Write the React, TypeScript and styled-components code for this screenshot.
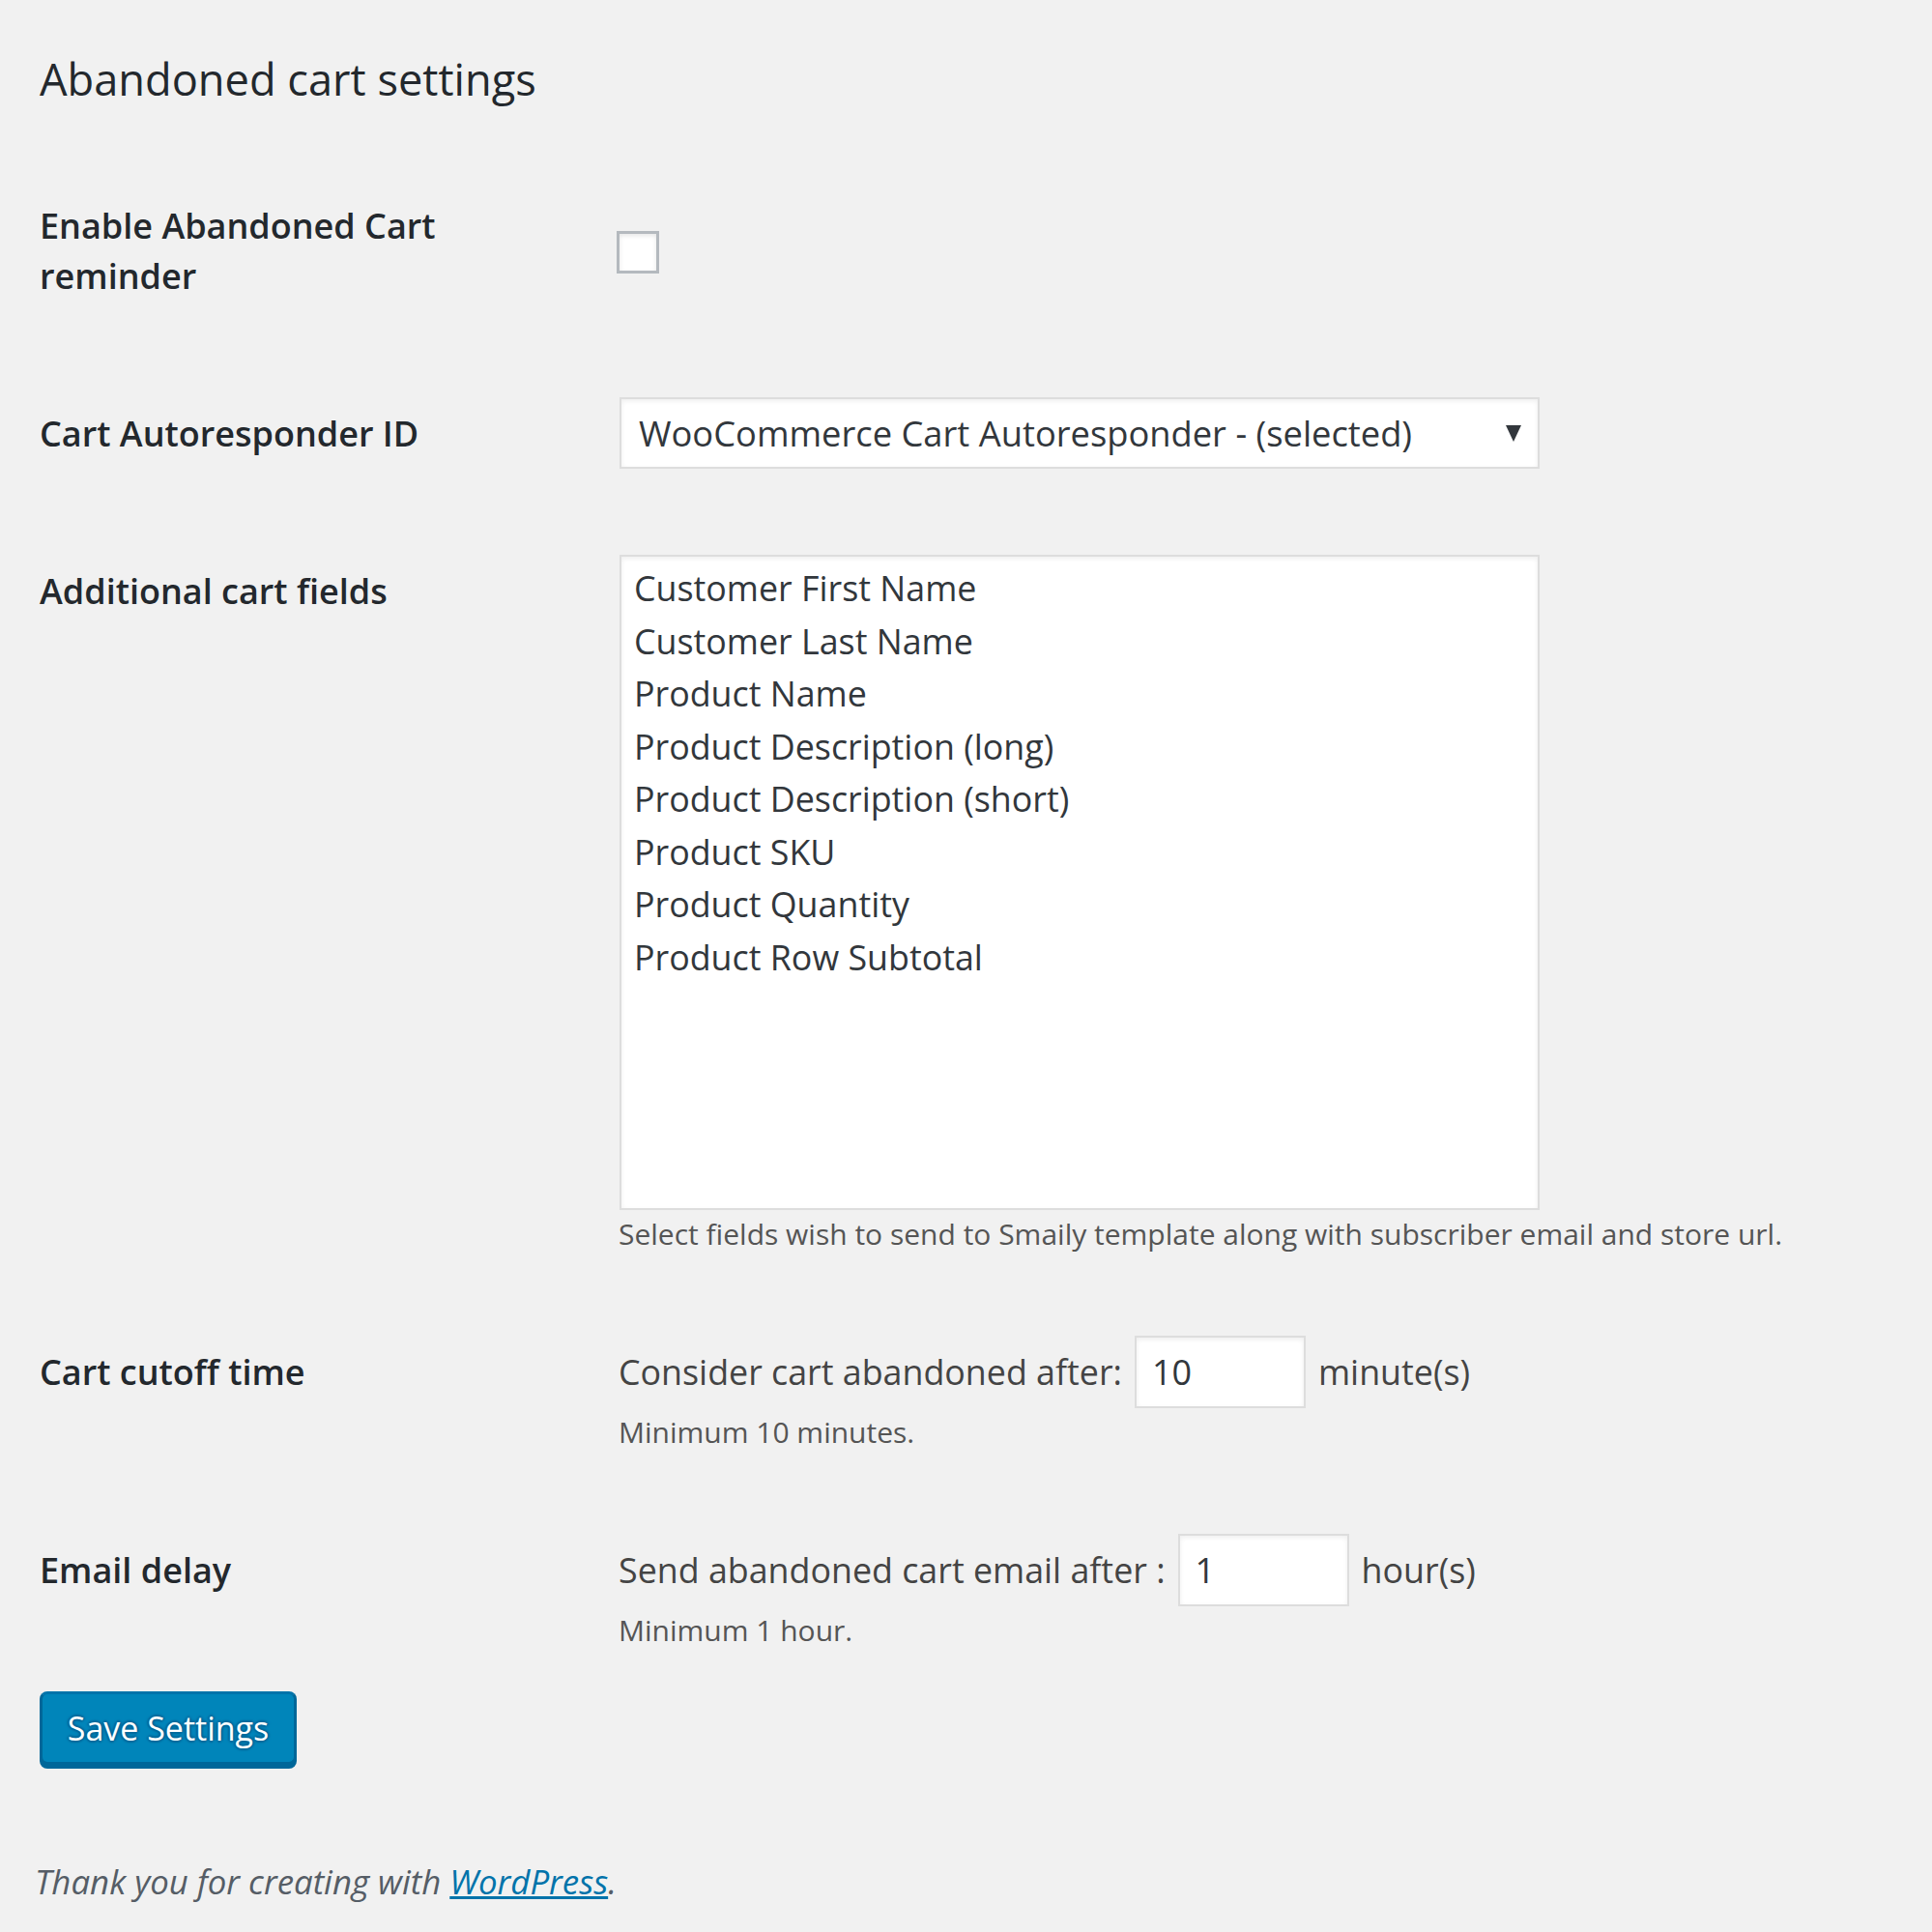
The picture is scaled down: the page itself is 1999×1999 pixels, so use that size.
import React from 'react';
import styled, { createGlobalStyle } from 'styled-components';

const GlobalStyle = createGlobalStyle`
    html, body {
        margin: 0;
        padding: 0;
        background: #f1f1f1;
    }
    body {
        font-family: 'Open Sans', 'Noto Sans', sans-serif;
        color: #444;
    }
`;

const Page = styled.div`
    min-height: 1999px;
    box-sizing: border-box;
    padding: 0 41px;
    background: #f1f1f1;
`;

const Title = styled.h2`
    margin: 0;
    padding-top: 52px;
    font-size: 45.2px;
    line-height: 60px;
    font-weight: 400;
    color: #23282d;
`;

const FormTable = styled.div`
    margin-top: 41.5px;
`;

const Row = styled.div`
    display: grid;
    grid-template-columns: 599px 1fr;
    align-items: start;
`;

const Label = styled.div`
    width: 544px;
    padding: 54.5px 0 56.5px;
    font-size: 36px;
    line-height: 52px;
    font-weight: 600;
    color: #23282d;
`;

const Field = styled.div`
    padding: 42.5px 0 41px;
`;

const Checkbox = styled.input.attrs({ type: 'checkbox' })`
    appearance: none;
    display: block;
    margin: 43px 0 0 -2px;
    width: 44px;
    height: 44px;
    box-sizing: border-box;
    border: 3px solid #b4b9be;
    background: #fff;
    box-shadow: inset 0 2px 5px rgba(0, 0, 0, 0.1);
`;

const SelectBox = styled.div`
    width: 952px;
    height: 74px;
    box-sizing: border-box;
    margin-left: 1px;
    padding: 0 17px 0 18px;
    display: flex;
    align-items: center;
    justify-content: space-between;
    border: 2px solid #ddd;
    background: #fff;
    box-shadow: inset 0 2px 5px rgba(0, 0, 0, 0.07);
    font-size: 36.3px;
    color: #32373c;
`;

const ListBox = styled.div`
    width: 952px;
    height: 678px;
    box-sizing: border-box;
    margin-left: 1px;
    padding: 5px 13px;
    border: 2px solid #ddd;
    background: #fff;
    box-shadow: inset 0 2px 5px rgba(0, 0, 0, 0.07);
`;

const Option = styled.div`
    font-size: 35.8px;
    line-height: 54.5px;
    color: #32373c;
`;

const Description = styled.p`
    margin: 3px 0 0;
    font-size: 30px;
    line-height: 43.5px;
    color: #555;
`;

const InlineLine = styled.div`
    display: flex;
    align-items: baseline;
    gap: 13px;
    font-size: 35.8px;
    color: #444;
`;

const NumberInput = styled.input`
    width: 177px;
    height: 75px;
    box-sizing: border-box;
    margin: 0;
    padding: 0 16px;
    border: 2px solid #ddd;
    background: #fff;
    box-shadow: inset 0 2px 5px rgba(0, 0, 0, 0.07);
    font-family: inherit;
    font-size: 36px;
    color: #32373c;
    outline: none;
`;

const SaveButton = styled.button`
    display: block;
    width: 266px;
    height: 76px;
    margin: 0;
    padding: 0;
    border: 3px solid;
    border-color: #0073aa #006799 #006799;
    border-radius: 8px;
    background: #0085ba;
    box-shadow: 0 4px 0 #006799;
    font-family: inherit;
    font-size: 34px;
    color: #fff;
    text-shadow: 0 -2px 2px #006799, 2px 0 2px #006799, 0 2px 2px #006799,
        -2px 0 2px #006799;
`;

const Footer = styled.p`
    margin: 94.5px 0 0 -5px;
    font-size: 34.8px;
    line-height: 53px;
    font-style: italic;
    color: #555d66;

    a {
        color: #0073aa;
        text-decoration: underline;
    }
`;

const Arrow = () => (
    <svg width="16" height="17" viewBox="0 0 16 17">
        <polygon points="0,0 16,0 8,17" fill="#32373c" />
    </svg>
);

const cartFields = [
    'Customer First Name',
    'Customer Last Name',
    'Product Name',
    'Product Description (long)',
    'Product Description (short)',
    'Product SKU',
    'Product Quantity',
    'Product Row Subtotal',
];

export default function App() {
    return (
        <Page>
            <GlobalStyle />
            <Title>Abandoned cart settings</Title>
            <FormTable>
                <Row>
                    <Label>Enable Abandoned Cart reminder</Label>
                    <Field>
                        <Checkbox />
                    </Field>
                </Row>
                <Row>
                    <Label>Cart Autoresponder ID</Label>
                    <Field>
                        <SelectBox>
                            <span>WooCommerce Cart Autoresponder - (selected)</span>
                            <Arrow />
                        </SelectBox>
                    </Field>
                </Row>
                <Row>
                    <Label>Additional cart fields</Label>
                    <Field>
                        <ListBox>
                            {cartFields.map((f) => (
                                <Option key={f}>{f}</Option>
                            ))}
                        </ListBox>
                        <Description>
                            Select fields wish to send to Smaily template along with subscriber
                            email and store url.
                        </Description>
                    </Field>
                </Row>
                <Row>
                    <Label>Cart cutoff time</Label>
                    <Field>
                        <InlineLine>
                            <span>Consider cart abandoned after:</span>
                            <NumberInput defaultValue="10" />
                            <span>minute(s)</span>
                        </InlineLine>
                        <Description>Minimum 10 minutes.</Description>
                    </Field>
                </Row>
                <Row>
                    <Label>Email delay</Label>
                    <Field>
                        <InlineLine>
                            <span>Send abandoned cart email after :</span>
                            <NumberInput defaultValue="1" />
                            <span>hour(s)</span>
                        </InlineLine>
                        <Description>Minimum 1 hour.</Description>
                    </Field>
                </Row>
            </FormTable>
            <SaveButton>Save Settings</SaveButton>
            <Footer>
                Thank you for creating with <a href="#">WordPress</a>.
            </Footer>
        </Page>
    );
}
